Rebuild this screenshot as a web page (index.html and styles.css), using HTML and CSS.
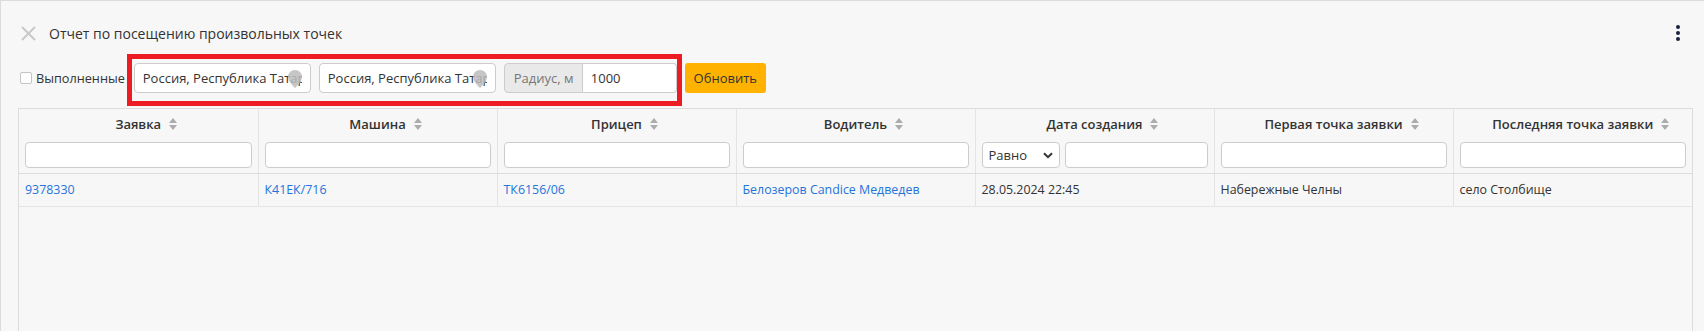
FILE: index.html
```html
<!DOCTYPE html>
<html lang="ru">
<head>
<meta charset="utf-8">
<title>Отчет по посещению произвольных точек</title>
<link rel="stylesheet" href="styles.css">
</head>
<body>
<div class="page">
  <div class="titlebar">
    <svg class="close" viewBox="0 0 15 15" width="15" height="15"><path d="M1 1L14 14M14 1L1 14" stroke="#c9c9c9" stroke-width="2" fill="none"/></svg>
    <span class="title">Отчет по посещению произвольных точек</span>
    <span class="kebab"><i></i><i></i><i></i></span>
  </div>
  <div class="toolbar">
    <label class="check"><span class="box"></span>Выполненные</label>
    <div class="addr">
      <input class="addr-input" type="text" value="Россия, Республика Татарстан, Набережные Челны">
      <svg class="pin" viewBox="0 0 14 18" width="14" height="18"><path d="M7 0C3.1 0 0 3.1 0 7c0 4.6 7 11 7 11s7-6.4 7-11C14 3.1 10.9 0 7 0z" fill="#bdbdbd"/></svg>
    </div>
    <div class="addr">
      <input class="addr-input" type="text" value="Россия, Республика Татарстан, Набережные Челны">
      <svg class="pin" viewBox="0 0 14 18" width="14" height="18"><path d="M7 0C3.1 0 0 3.1 0 7c0 4.6 7 11 7 11s7-6.4 7-11C14 3.1 10.9 0 7 0z" fill="#bdbdbd"/></svg>
    </div>
    <div class="radius">
      <span class="addon">Радиус, м</span>
      <input class="radius-input" type="text" value="1000">
    </div>
    <button class="refresh" type="button">Обновить</button>
    <div class="mark"></div>
  </div>
  <div class="grid-wrap">
    <table class="grid">
      <thead>
        <tr>
          <th><div class="th-title"><span class="lbl">Заявка<svg class="sort" viewBox="0 0 8 12" width="8" height="12"><path d="M4 0L8 5H0z M4 12L0 7h8z" fill="#acacac"/></svg></span></div><div class="filter"></div></th>
          <th><div class="th-title"><span class="lbl">Машина<svg class="sort" viewBox="0 0 8 12" width="8" height="12"><path d="M4 0L8 5H0z M4 12L0 7h8z" fill="#acacac"/></svg></span></div><div class="filter"></div></th>
          <th><div class="th-title"><span class="lbl">Прицеп<svg class="sort" viewBox="0 0 8 12" width="8" height="12"><path d="M4 0L8 5H0z M4 12L0 7h8z" fill="#acacac"/></svg></span></div><div class="filter"></div></th>
          <th><div class="th-title"><span class="lbl">Водитель<svg class="sort" viewBox="0 0 8 12" width="8" height="12"><path d="M4 0L8 5H0z M4 12L0 7h8z" fill="#acacac"/></svg></span></div><div class="filter"></div></th>
          <th><div class="th-title"><span class="lbl">Дата создания<svg class="sort" viewBox="0 0 8 12" width="8" height="12"><path d="M4 0L8 5H0z M4 12L0 7h8z" fill="#acacac"/></svg></span></div>
            <div class="date-filter">
              <div class="select"><span>Равно</span><svg viewBox="0 0 10 7" width="10" height="7"><path d="M1 1.2L5 5.2L9 1.2" stroke="#333" stroke-width="2" fill="none"/></svg></div>
              <div class="filter grow"></div>
            </div>
          </th>
          <th><div class="th-title"><span class="lbl">Первая точка заявки<svg class="sort" viewBox="0 0 8 12" width="8" height="12"><path d="M4 0L8 5H0z M4 12L0 7h8z" fill="#acacac"/></svg></span></div><div class="filter"></div></th>
          <th><div class="th-title"><span class="lbl">Последняя точка заявки<svg class="sort" viewBox="0 0 8 12" width="8" height="12"><path d="M4 0L8 5H0z M4 12L0 7h8z" fill="#acacac"/></svg></span></div><div class="filter"></div></th>
        </tr>
      </thead>
      <tbody>
        <tr>
          <td><a class="link" href="#">9378330</a></td>
          <td><a class="link" href="#">К41ЕК/716</a></td>
          <td><a class="link" href="#">ТК6156/06</a></td>
          <td><a class="link" href="#">Белозеров Candice Медведев</a></td>
          <td>28.05.2024 22:45</td>
          <td>Набережные Челны</td>
          <td>село Столбище</td>
        </tr>
      </tbody>
    </table>
  </div>
</div>
</body>
</html>
```
FILE: styles.css
```css
* { box-sizing: border-box; }
html, body { margin: 0; height: 100%; }
body {
  background: #f7f7f7;
  font-family: "Open Sans", "Noto Sans", sans-serif;
  font-size: 13px;
  color: #333;
  overflow: hidden;
}
.page {
  height: 331px;
  border-top: 1px solid #dcdcdc;
  border-left: 1px solid #dcdcdc;
  overflow: hidden;
}
.titlebar {
  display: flex;
  align-items: center;
  height: 24px;
  margin-top: 20px;
  padding: 0 24px 0 20px;
}
.close { flex: none; margin-right: 13px; }
.title { flex: 1; font-size: 14px; color: #333; }
.kebab { display: flex; flex-direction: column; gap: 2px; }
.kebab i { display: block; width: 4px; height: 4px; border-radius: 50%; background: #1c2340; }

.toolbar {
  position: relative;
  display: flex;
  align-items: center;
  gap: 8px;
  height: 30px;
  margin-top: 18px;
  padding-left: 19px;
}
.check { display: flex; align-items: center; gap: 4px; margin-right: 1px; color: #333; font-size: 12.7px; }
.box {
  width: 12px; height: 12px;
  border: 1px solid #c4c4c4;
  border-radius: 2px;
  background: #fff;
}
.addr { position: relative; width: 177px; height: 30px; flex: none; }
.addr-input, .radius-input {
  width: 100%; height: 100%;
  border: 1px solid #ccc;
  border-radius: 4px;
  padding: 0 8px;
  font: inherit;
  color: #333;
  background: #fff;
  outline: none;
}
.pin { position: absolute; right: 9px; top: 7px; opacity: 0.85; }
.radius { display: flex; width: 173px; height: 30px; flex: none; }
.addon {
  width: 79px;
  flex: none;
  display: flex;
  align-items: center;
  padding-left: 9px;
  background: #e9e9e9;
  border: 1px solid #ccc;
  border-radius: 4px 0 0 4px;
  color: #777;
}
.radius-input { flex: 1; border-left: none; border-radius: 0 4px 4px 0; }
.refresh {
  width: 81px; height: 30px;
  border: none;
  border-radius: 3px;
  background: #ffb300;
  color: #333;
  font: inherit;
  padding: 0;
}
.mark {
  position: absolute;
  left: 126px;
  top: -9px;
  width: 555px;
  height: 52px;
  border: 5px solid #ed1c24;
  pointer-events: none;
}

.grid-wrap {
  margin: 15px 11px 0 17px;
  height: 260px;
  border: 1px solid #dcdcdc;
  border-bottom: none;
}
.grid { width: 100%; border-collapse: collapse; table-layout: fixed; }
.grid th {
  padding: 6px 6px 5px;
  border-right: 1px solid #e4e4e4;
  border-bottom: 1px solid #dcdcdc;
  font-weight: 600;
  vertical-align: top;
}
.grid th:last-child, .grid td:last-child { border-right: none; }
.th-title { height: 18px; line-height: 18px; text-align: center; margin-bottom: 9px; }
.lbl { position: relative; display: inline-block; }
.sort { position: absolute; left: calc(100% + 8px); top: 3px; }
.filter {
  height: 26px;
  border: 1px solid #ccc;
  border-radius: 4px;
  background: #fff;
}
.date-filter { display: flex; gap: 5px; }
.select {
  width: 78px;
  height: 26px;
  flex: none;
  display: flex;
  align-items: center;
  justify-content: space-between;
  padding: 0 6px;
  border: 1px solid #ccc;
  border-radius: 4px;
  background: #fff;
  font-weight: 400;
}
.grow { flex: 1; }
.grid td {
  padding: 7px 6px;
  line-height: 18px;
  font-size: 12.4px;
  border-right: 1px solid #e4e4e4;
  border-bottom: 1px solid #e4e4e4;
  white-space: nowrap;
}
.link { color: #2474dc; text-decoration: none; }
```
